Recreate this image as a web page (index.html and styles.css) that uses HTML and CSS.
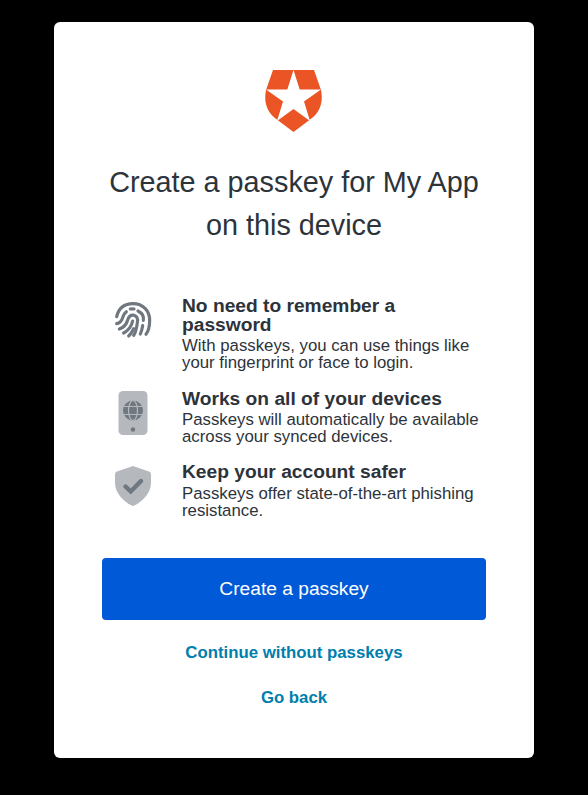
FILE: index.html
```html
<!DOCTYPE html>
<html lang="en">
<head>
<meta charset="utf-8">
<title>Create a passkey</title>
<link rel="stylesheet" href="styles.css">
</head>
<body>
<main class="card">
  <svg class="logo" viewBox="0 0 57 62" aria-hidden="true">
    <path fill="#eb5424" d="M8 0H49L56 20C59 35 53 44 44.500 50L28.500 62L12.500 50C4 44-2 35 1 20Z"/>
    <path fill="#fff" d="M28.500 0L34.700 19.500H56L39 31.500L45 51L28.500 39L12 51L18 31.500L1 19.500H22.300Z"/>
  </svg>
  <h1 class="title">Create a passkey for My App on this device</h1>
  <ul class="benefits">
    <li class="benefit">
      <svg class="icon" viewBox="42 33 114 114" aria-hidden="true">
        <g fill="none" stroke="#6f7780" stroke-width="9.500" stroke-linecap="round">
          <path d="M50 80C56 55 74 41 99 41C129 41 149 62 149 91C149 109 145 124 138 133"/>
          <path d="M50 101C64 99 67 87 69 80C71 74 74 69 79 65M91 57Q96 56 102 57M114 63C128 70 132 80 130 91M128 107Q126 120 121 132"/>
          <path d="M58 117C76 111 80 101 83 90C87 78 95 74 102 76C112 79 114 88 112 98C110 114 108 128 101 136"/>
          <path d="M71 129C89 119 95 107 98 93M86 138Q95 130 101 116"/>
        </g>
      </svg>
      <div class="copy">
        <h2 class="heading">No need to remember a password</h2>
        <p class="text">With passkeys, you can use things like your fingerprint or face to login.</p>
      </div>
    </li>
    <li class="benefit">
      <svg class="icon" viewBox="0 0 38 44" aria-hidden="true">
        <rect x="4.500" width="29" height="44" rx="4.500" fill="#b5b9be"/>
        <circle cx="19" cy="19.500" r="10" fill="#6f7780"/>
        <g fill="none" stroke="#b5b9be" stroke-width="1.200">
          <ellipse cx="19" cy="19.500" rx="4.500" ry="10"/>
          <path d="M9 15.500H29M9 23.500H29"/>
        </g>
        <circle cx="19" cy="38.500" r="2.200" fill="#6f7780"/>
      </svg>
      <div class="copy">
        <h2 class="heading">Works on all of your devices</h2>
        <p class="text">Passkeys will automatically be available across your synced devices.</p>
      </div>
    </li>
    <li class="benefit">
      <svg class="icon" viewBox="0 0 38 40" aria-hidden="true">
        <path fill="#b5b9be" d="M17.500.400Q19-.200 20.500.400L35 5.500Q37 6.200 37 8.500V17C37 27 29 35 20.500 39.500Q19 40.300 17.500 39.500C9 35 1 27 1 17V8.500Q1 6.200 3 5.500Z"/>
        <path d="M11.500 20.500L16.700 25.500L27 15" fill="none" stroke="#6f7780" stroke-width="4.400" stroke-linecap="round"/>
      </svg>
      <div class="copy">
        <h2 class="heading">Keep your account safer</h2>
        <p class="text text-last">Passkeys offer state-of-the-art phishing resistance.</p>
      </div>
    </li>
  </ul>
  <button class="primary" type="button">Create a passkey</button>
  <a class="link" href="#">Continue without passkeys</a>
  <a class="link" href="#">Go back</a>
</main>
</body>
</html>
```
FILE: styles.css
```css
* { box-sizing: border-box; }
body {
  margin: 0;
  min-height: 795px;
  padding: 22px 54px 0;
  background: #000;
  color: #2d333a;
  font-family: "Liberation Sans", Arial, sans-serif;
}
.card {
  display: flex;
  flex-direction: column;
  align-items: center;
  height: 736px;
  padding: 48px 48px 0;
  background: #fff;
  border-radius: 6px;
}
.logo { width: 57px; height: 62px; flex: none; margin-right: 2px; }
.title {
  margin: 29px 0 0;
  font-size: 28.800px;
  font-weight: 400;
  line-height: 43px;
  text-align: center;
}
.benefits {
  width: 100%;
  margin: 49px 0 0;
  padding: 0 0 0 12px;
  list-style: none;
}
.benefit { display: flex; gap: 30px; }
.benefit + .benefit { margin-top: 17px; }
.benefit:nth-child(2) { margin-top: 18px; }
.icon { flex: none; width: 38px; height: 44px; margin-top: 2px; }
.copy { flex: 1; }
.heading {
  margin: 0;
  font-size: 19.200px;
  font-weight: 700;
  line-height: 19px;
}
.text {
  margin: 3px 0 0;
  font-size: 16.800px;
  line-height: 17px;
}
.text-last { margin-top: 4px; }
.primary {
  flex: none;
  width: 100%;
  height: 62px;
  margin-top: 39px;
  border: 0;
  border-radius: 4px;
  background: #0059d6;
  color: #fff;
  font: 400 19.200px "Liberation Sans", Arial, sans-serif;
}
.link {
  margin-top: 20px;
  color: #007ead;
  font-size: 16.800px;
  font-weight: 700;
  line-height: 25px;
  text-decoration: none;
}
```
